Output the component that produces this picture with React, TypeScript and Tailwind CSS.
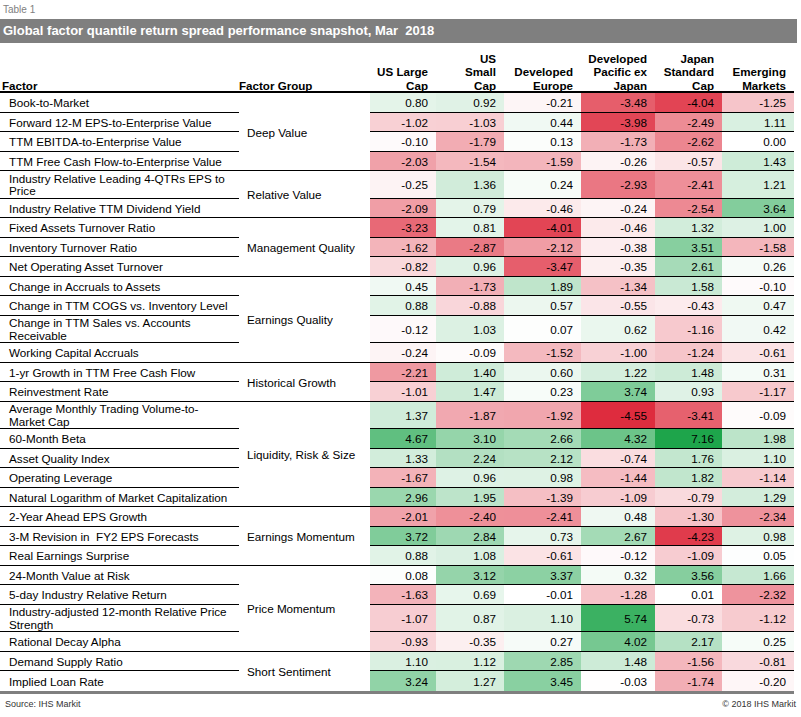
import React from "react";

type Row = { label: string[]; values: number[] };
type Group = { name: string; rows: Row[] };

const r = (label: string, values: number[]): Row => ({
  label: label.split("|"),
  values,
});

const groups: Group[] = [
  {
    name: "Deep Value",
    rows: [
      r("Book-to-Market", [0.8, 0.92, -0.21, -3.48, -4.04, -1.25]),
      r("Forward 12-M EPS-to-Enterprise Value", [-1.02, -1.03, 0.44, -3.98, -2.49, 1.11]),
      r("TTM EBITDA-to-Enterprise Value", [-0.1, -1.79, 0.13, -1.73, -2.62, 0.0]),
      r("TTM Free Cash Flow-to-Enterprise Value", [-2.03, -1.54, -1.59, -0.26, -0.57, 1.43]),
    ],
  },
  {
    name: "Relative Value",
    rows: [
      r("Industry Relative Leading 4-QTRs EPS to|Price", [-0.25, 1.36, 0.24, -2.93, -2.41, 1.21]),
      r("Industry Relative TTM Dividend Yield", [-2.09, 0.79, -0.46, -0.24, -2.54, 3.64]),
    ],
  },
  {
    name: "Management Quality",
    rows: [
      r("Fixed Assets Turnover Ratio", [-3.23, 0.81, -4.01, -0.46, 1.32, 1.0]),
      r("Inventory Turnover Ratio", [-1.62, -2.87, -2.12, -0.38, 3.51, -1.58]),
      r("Net Operating Asset Turnover", [-0.82, 0.96, -3.47, -0.35, 2.61, 0.26]),
    ],
  },
  {
    name: "Earnings Quality",
    rows: [
      r("Change in Accruals to Assets", [0.45, -1.73, 1.89, -1.34, 1.58, -0.1]),
      r("Change in TTM COGS vs. Inventory Level", [0.88, -0.88, 0.57, -0.55, -0.43, 0.47]),
      r("Change in TTM Sales vs. Accounts|Receivable", [-0.12, 1.03, 0.07, 0.62, -1.16, 0.42]),
      r("Working Capital Accruals", [-0.24, -0.09, -1.52, -1.0, -1.24, -0.61]),
    ],
  },
  {
    name: "Historical Growth",
    rows: [
      r("1-yr Growth in TTM Free Cash Flow", [-2.21, 1.4, 0.6, 1.22, 1.48, 0.31]),
      r("Reinvestment Rate", [-1.01, 1.47, 0.23, 3.74, 0.93, -1.17]),
    ],
  },
  {
    name: "Liquidity, Risk & Size",
    rows: [
      r("Average Monthly Trading Volume-to-|Market Cap", [1.37, -1.87, -1.92, -4.55, -3.41, -0.09]),
      r("60-Month Beta", [4.67, 3.1, 2.66, 4.32, 7.16, 1.98]),
      r("Asset Quality Index", [1.33, 2.24, 2.12, -0.74, 1.76, 1.1]),
      r("Operating Leverage", [-1.67, 0.96, 0.98, -1.44, 1.82, -1.14]),
      r("Natural Logarithm of Market Capitalization", [2.96, 1.95, -1.39, -1.09, -0.79, 1.29]),
    ],
  },
  {
    name: "Earnings Momentum",
    rows: [
      r("2-Year Ahead EPS Growth", [-2.01, -2.4, -2.41, 0.48, -1.3, -2.34]),
      r("3-M Revision in  FY2 EPS Forecasts", [3.72, 2.84, 0.73, 2.67, -4.23, 0.98]),
      r("Real Earnings Surprise", [0.88, 1.08, -0.61, -0.12, -1.09, 0.05]),
    ],
  },
  {
    name: "Price Momentum",
    rows: [
      r("24-Month Value at Risk", [0.08, 3.12, 3.37, 0.32, 3.56, 1.66]),
      r("5-day Industry Relative Return", [-1.63, 0.69, -0.01, -1.28, 0.01, -2.32]),
      r("Industry-adjusted 12-month Relative Price|Strength", [-1.07, 0.87, 1.1, 5.74, -0.73, -1.12]),
      r("Rational Decay Alpha", [-0.93, -0.35, 0.27, 4.02, 2.17, 0.25]),
    ],
  },
  {
    name: "Short Sentiment",
    rows: [
      r("Demand Supply Ratio", [1.1, 1.12, 2.85, 1.48, -1.56, -0.81]),
      r("Implied Loan Rate", [3.24, 1.27, 3.45, -0.03, -1.74, -0.2]),
    ],
  },
];

const columns = [
  { w: "w-[66px]", label: ["US Large", "Cap"] },
  { w: "w-[68px]", label: ["US", "Small", "Cap"] },
  { w: "w-[77px]", label: ["Developed", "Europe"] },
  { w: "w-[74px]", label: ["Developed", "Pacific ex", "Japan"] },
  { w: "w-[67px]", label: ["Japan", "Standard", "Cap"] },
  { w: "w-[72px]", label: ["Emerging", "Markets"] },
];

// white -> red below zero, white -> green above
function heat(v: number) {
  const mix = (a: number, t: number) => Math.round(255 - (255 - a) * t);
  if (v < 0) {
    const t = Math.min(1, -v / 4.55);
    return `rgb(${mix(222, t)},${mix(44, t)},${mix(62, t)})`;
  }
  const t = Math.min(1, v / 6.6);
  return `rgb(${mix(30, t)},${mix(165, t)},${mix(75, t)})`;
}

export default function App() {
  return (
    <div className="min-h-[717px] w-[801px] bg-white font-['Liberation_Sans',Arial,sans-serif] text-black">
      <div className="flex h-[19px] items-center pl-[3px] text-[10px] leading-[10px] text-[#808080]">
        Table 1
      </div>
      <div className="flex h-[24px] w-[797px] items-center whitespace-pre bg-[#7f7f7f] pl-[3px] text-[13px] font-bold text-white">
        Global factor quantile return spread performance snapshot, Mar  2018
      </div>

      <div className="w-[794px]">
        <div className="flex h-[50px] items-end border-b-2 border-black text-[11.6px] font-bold leading-[13.3px]">
          <div className="w-[239px] translate-y-[1px] pl-[2px]">Factor</div>
          <div className="w-[131px] translate-y-[1px]">Factor Group</div>
          {columns.map((c, i) => (
            <div key={i} className={`${c.w} translate-y-[1px] pr-2 text-right`}>
              {c.label.map((l, j) => (
                <div key={j}>{l}</div>
              ))}
            </div>
          ))}
        </div>

        <div className="border-b-[3px] border-[#7f7f7f] text-[11.7px]">
          {groups.map((g, gi) => {
            const lastGroup = gi === groups.length - 1;
            return (
              <div key={gi} className="flex">
                <div className="flex w-[239px] flex-col">
                  {g.rows.map((row, ri) => {
                    const noLine = lastGroup && ri === g.rows.length - 1;
                    return (
                      <div
                        key={ri}
                        className={`flex items-center whitespace-pre pl-[9px] pt-[2px] leading-[12.5px] ${
                          row.label.length > 1 ? "h-[27.5px]" : "h-[19.5px]"
                        } ${noLine ? "" : "border-b border-black"}`}
                      >
                        <div>
                          {row.label.map((l, j) => (
                            <div key={j}>{l}</div>
                          ))}
                        </div>
                      </div>
                    );
                  })}
                </div>
                <div
                  className={`flex w-[131px] items-center pl-[8px] pt-[2px] ${
                    lastGroup ? "" : "border-b border-black"
                  }`}
                >
                  {g.name}
                </div>
                <div className="flex w-[424px] flex-col">
                  {g.rows.map((row, ri) => {
                    const noLine = lastGroup && ri === g.rows.length - 1;
                    return (
                      <div
                        key={ri}
                        className={`flex ${
                          row.label.length > 1 ? "h-[27.5px]" : "h-[19.5px]"
                        } ${noLine ? "" : "border-b border-black"}`}
                      >
                        {row.values.map((v, i) => (
                          <div
                            key={i}
                            className={`${columns[i].w} flex items-center justify-end pr-2 pt-[2px] tabular-nums`}
                            style={{ backgroundColor: heat(v) }}
                          >
                            {v.toFixed(2)}
                          </div>
                        ))}
                      </div>
                    );
                  })}
                </div>
              </div>
            );
          })}
        </div>
      </div>

      <div className="flex h-[22px] w-[796px] items-center justify-between pl-[5px] text-[9px] text-[#333]">
        <span>Source: IHS Markit</span>
        <span>© 2018 IHS Markit</span>
      </div>
    </div>
  );
}
